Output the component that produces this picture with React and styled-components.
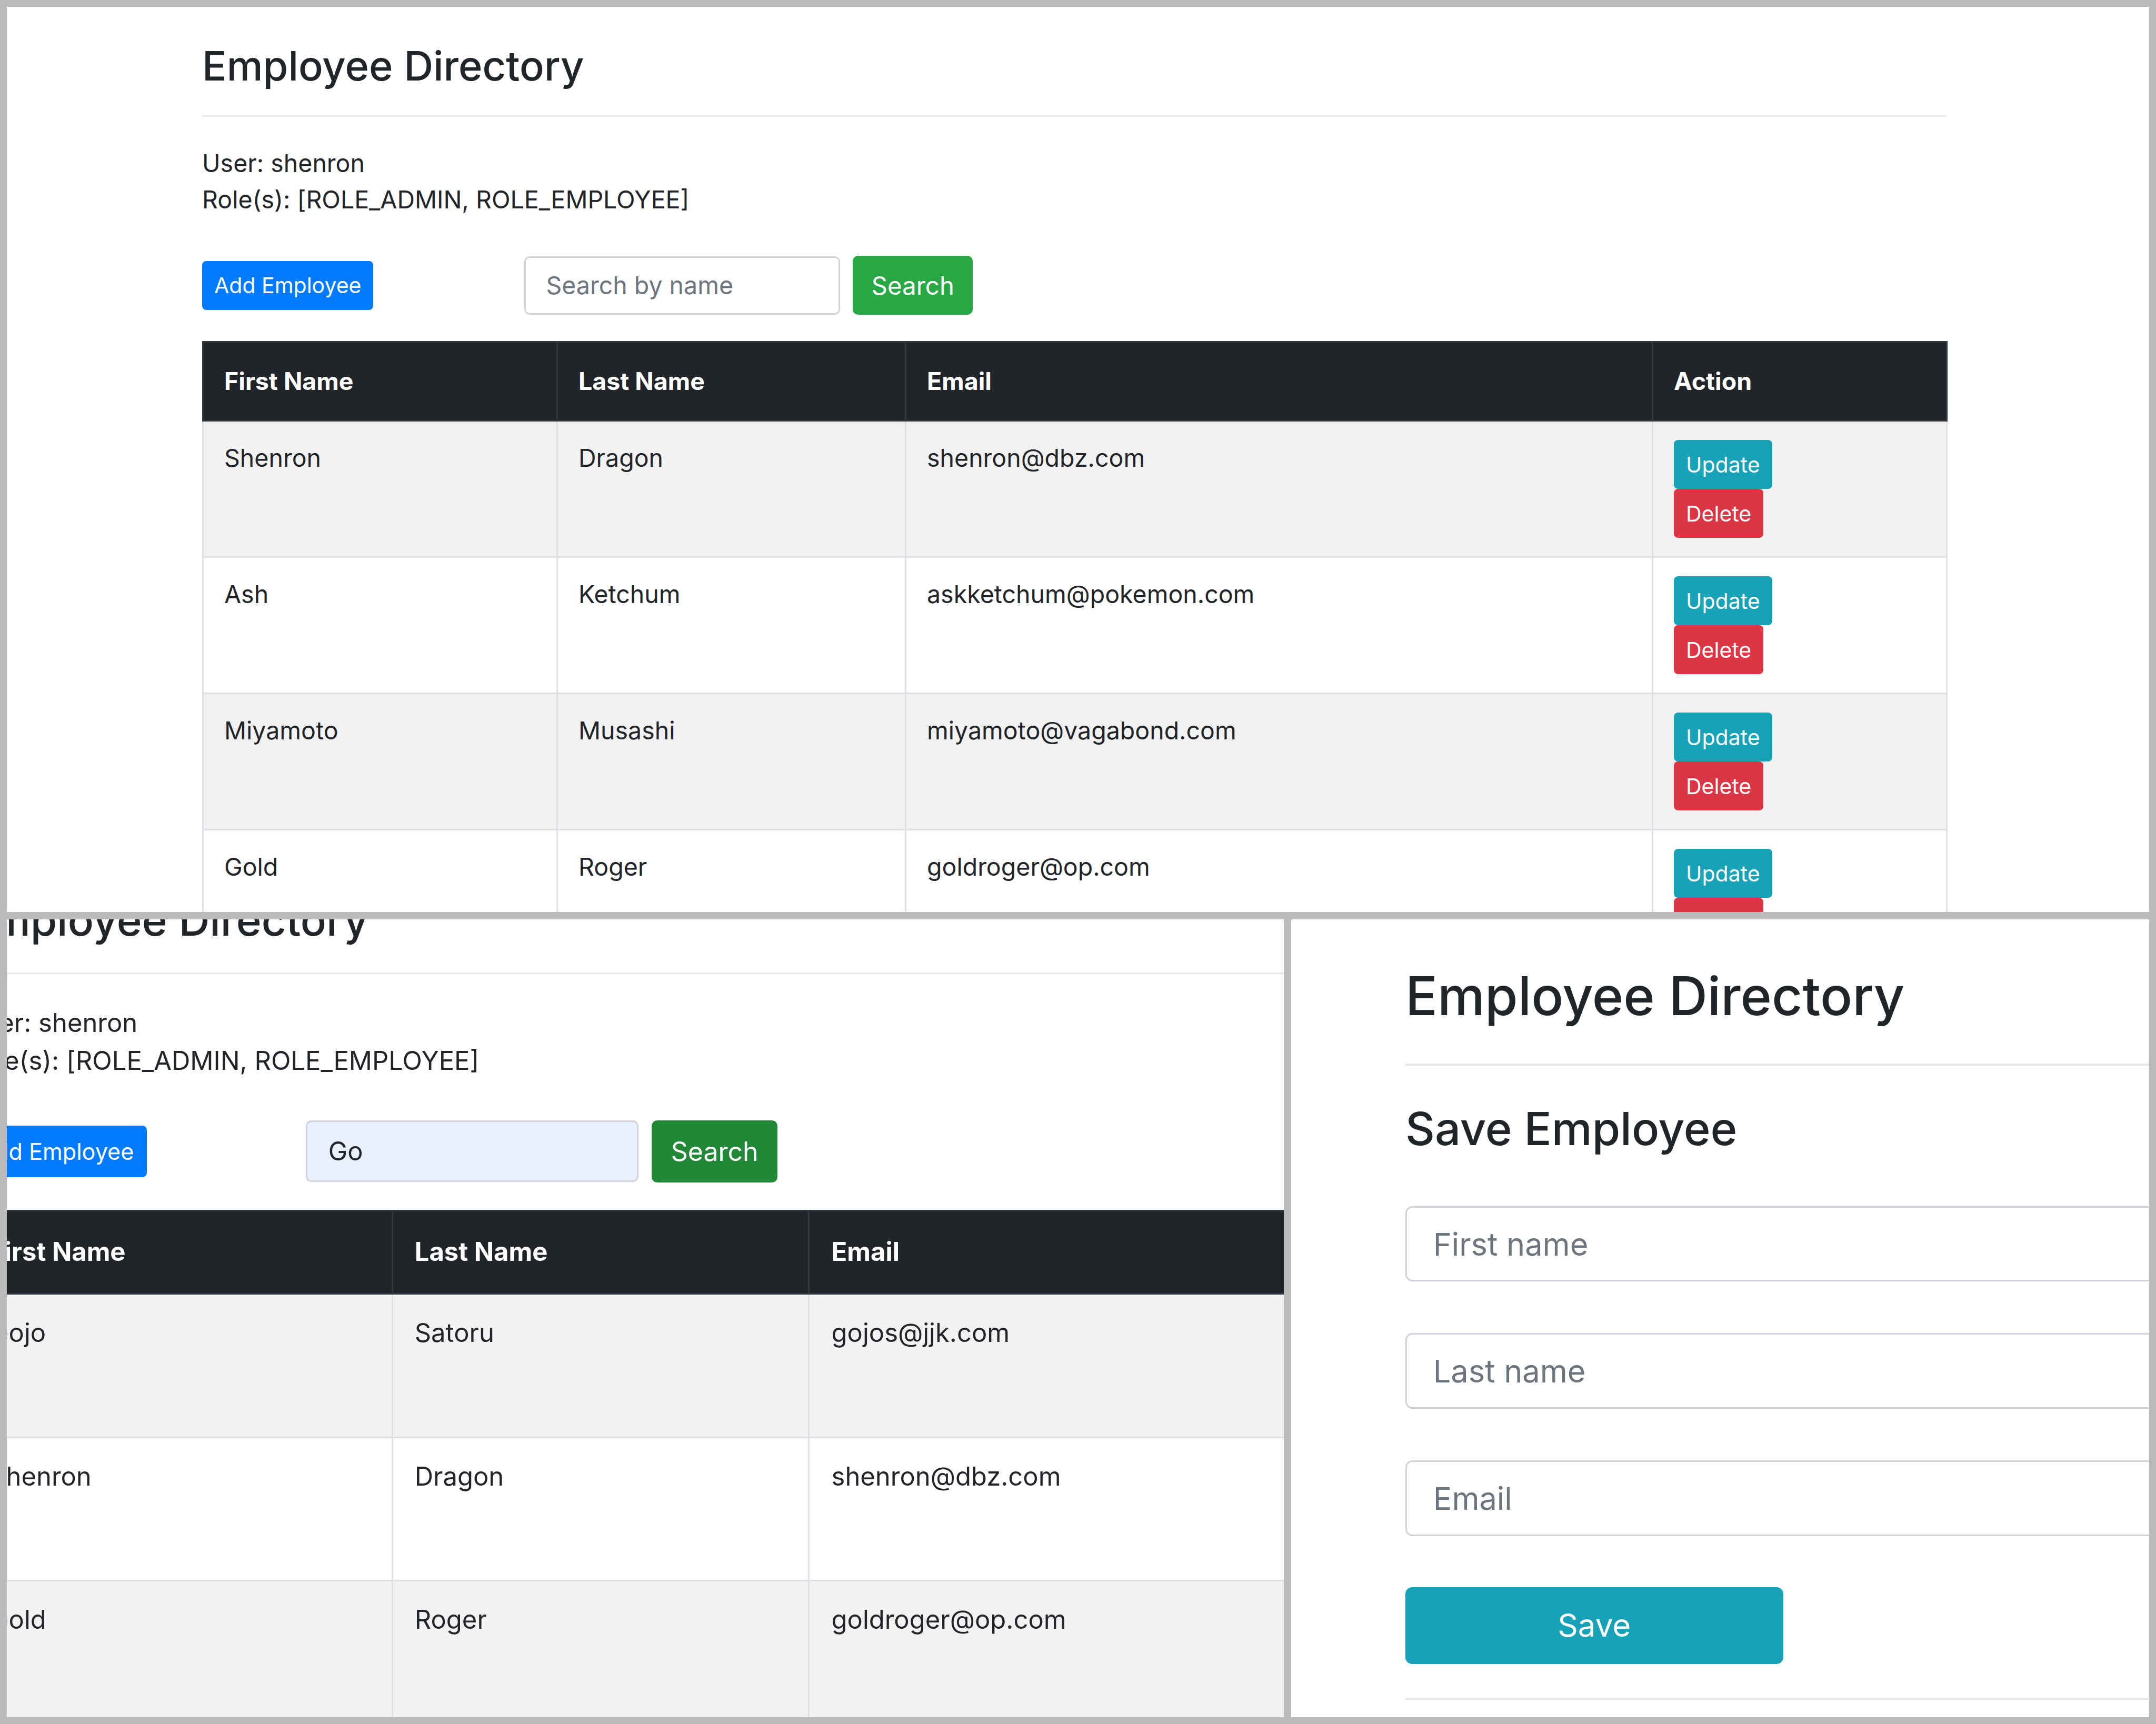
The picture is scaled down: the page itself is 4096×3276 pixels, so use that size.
import React from 'react'
import styled, {createGlobalStyle} from 'styled-components'

// every size below is in "page px" and gets multiplied by the shot's zoom (--k)
const u = (n) => `calc(var(--k) * ${n}px)`

const topRows = [
    {first: 'Shenron', last: 'Dragon', email: 'shenron@dbz.com'},
    {first: 'Ash', last: 'Ketchum', email: 'askketchum@pokemon.com'},
    {first: 'Miyamoto', last: 'Musashi', email: 'miyamoto@vagabond.com'},
    {first: 'Gold', last: 'Roger', email: 'goldroger@op.com'},
]

const searchRows = [
    {first: 'Gojo', last: 'Satoru', email: 'gojos@jjk.com'},
    {first: 'Shenron', last: 'Dragon', email: 'shenron@dbz.com'},
    {first: 'Gold', last: 'Roger', email: 'goldroger@op.com'},
]

const DirectoryPage = ({cols, rows, query, active}) => (
    <Container $w={cols.reduce((a, b) => a + b, 0)}>
        <Title>Employee Directory</Title>
        <Rule/>
        <Info>
            <InfoLine>User: shenron</InfoLine>
            <InfoLine>Role(s): [ROLE_ADMIN, ROLE_EMPLOYEE]</InfoLine>
        </Info>
        <Toolbar>
            <SmallButton $color="#007bff">Add Employee</SmallButton>
            <SearchForm>
                <SearchInput placeholder="Search by name" value={query} readOnly $filled={!!query}/>
                <SearchButton $active={active}>Search</SearchButton>
            </SearchForm>
        </Toolbar>
        <Table>
            <colgroup>
                {cols.map((w, i) => <Col key={i} $w={w}/>)}
            </colgroup>
            <thead>
            <tr>
                <Th>First Name</Th>
                <Th>Last Name</Th>
                <Th>Email</Th>
                <Th>Action</Th>
            </tr>
            </thead>
            <tbody>
            {rows.map((row, i) =>
                <Tr key={i}>
                    <Td>{row.first}</Td>
                    <Td>{row.last}</Td>
                    <Td>{row.email}</Td>
                    <Td>
                        <ButtonStack>
                            <SmallButton $color="#17a2b8">Update</SmallButton>
                            <SmallButton $color="#dc3545">Delete</SmallButton>
                        </ButtonStack>
                    </Td>
                </Tr>
            )}
            </tbody>
        </Table>
    </Container>
)

const SaveForm = () => (
    <Container $w={1300}>
        <Title>Employee Directory</Title>
        <Rule $top={50}/>
        <SubTitle>Save Employee</SubTitle>
        <Field placeholder="First name"/>
        <Field placeholder="Last name"/>
        <Field placeholder="Email"/>
        <SaveButton>Save</SaveButton>
        <Rule $top={49}/>
    </Container>
)

const App = () => {
    return (
        <>
            <GlobalStyle/>
            <Collage>
                <Shot $k={1} $wide $x={371} $y={64}>
                    <DirectoryPage cols={[673, 662, 1419, 559]} rows={topRows}/>
                </Shot>
                <Shot $k={1.053} $x={-77} $y={-49}>
                    <DirectoryPage cols={[767, 752, 1330, 530]} rows={searchRows} query="Go" active/>
                </Shot>
                <Shot $k={1.307} $x={217} $y={82}>
                    <SaveForm/>
                </Shot>
            </Collage>
        </>
    )
}

export default App

const GlobalStyle = createGlobalStyle`
  html, body {
    margin: 0;
    padding: 0;
    background: #bbbbbb;
  }

  body {
    font-family: Inter, "Noto Sans", "Liberation Sans", sans-serif;
    color: #212529;
  }

  * {
    box-sizing: border-box;
  }
`

const Collage = styled.div`
  width: 4096px;
  height: 3276px;
  padding: 13px;
  display: grid;
  grid-template-columns: 2426px 1630px;
  grid-template-rows: 1720px 1516px;
  gap: 14px;
  background: #bbbbbb;
`

const Shot = styled.section`
  --k: ${p => p.$k};
  grid-column: ${p => p.$wide ? '1 / span 2' : 'auto'};
  background: #ffffff;
  overflow: hidden;
  padding-left: ${p => Math.max(p.$x, 0)}px;
  padding-top: ${p => Math.max(p.$y, 0)}px;

  & > div {
    margin-left: ${p => Math.min(p.$x, 0)}px;
    margin-top: ${p => Math.min(p.$y, 0)}px;
  }
`

const Container = styled.div`
  width: ${p => u(p.$w)};
  flex-shrink: 0;
`

const Title = styled.h3`
  margin: 0;
  font-size: ${u(77.5)};
  line-height: ${u(97)};
  font-weight: 500;
  color: #212529;
`

const SubTitle = styled.h4`
  margin: ${u(50)} 0 0;
  font-size: ${u(66.2)};
  line-height: ${u(84)};
  font-weight: 500;
`

const Rule = styled.div`
  margin-top: ${p => u(p.$top ?? 45)};
  height: ${u(3)};
  background: #e6e7e8;
`

const Info = styled.div`
  margin-top: ${u(54)};
  font-size: ${u(46.5)};
  line-height: ${u(69)};
`

const InfoLine = styled.div``

const Toolbar = styled.div`
  margin-top: ${u(72)};
  height: ${u(112)};
  display: flex;
  align-items: center;
`

const SearchForm = styled.div`
  margin-left: ${u(287)};
  display: flex;
  align-items: center;
  gap: ${u(24)};
`

const SmallButton = styled.button`
  height: ${u(93)};
  padding: 0 ${u(23)};
  border: none;
  border-radius: ${u(8)};
  background: ${p => p.$color};
  color: #ffffff;
  font-family: inherit;
  font-size: ${u(41)};
  font-weight: 400;
  white-space: nowrap;
`

const SearchInput = styled.input`
  width: ${u(600)};
  height: ${u(111)};
  padding: 0 ${u(38)};
  border: ${u(3)} solid #ced4da;
  border-radius: ${u(10)};
  background: ${p => p.$filled ? '#e8f0fe' : '#ffffff'};
  color: #212529;
  font-family: inherit;
  font-size: ${u(46.5)};
  outline: none;

  &::placeholder {
    color: #6c757d;
  }
`

const SearchButton = styled.button`
  height: ${u(112)};
  padding: 0 ${u(35)};
  border: none;
  border-radius: ${u(10)};
  background: ${p => p.$active ? '#218838' : '#28a745'};
  color: #ffffff;
  font-family: inherit;
  font-size: ${u(47.5)};
`

const Table = styled.table`
  margin-top: ${u(50)};
  border-collapse: collapse;
  table-layout: fixed;
  width: 100%;
  font-size: ${u(46.5)};
  line-height: ${u(69)};
`

const Col = styled.col`
  width: ${p => u(p.$w)};
`

const Th = styled.th`
  height: ${u(150)};
  padding: 0 ${u(39)};
  background: #212529;
  color: #ffffff;
  font-weight: 700;
  text-align: left;
  border: ${u(3)} solid #32383e;
`

const Tr = styled.tr`
  &:nth-of-type(odd) {
    background: #f2f2f2;
  }
`

const Td = styled.td`
  padding: ${u(35)} ${u(39)};
  vertical-align: top;
  border: ${u(3)} solid #dee2e6;
  color: #212529;
`

const ButtonStack = styled.div`
  display: flex;
  flex-direction: column;
  align-items: flex-start;
`

const Field = styled.input`
  display: block;
  width: 100%;
  height: ${u(110)};
  margin-top: ${u(70)};
  padding: 0 ${u(38)};
  border: ${u(3)} solid #ced4da;
  border-radius: ${u(10)};
  font-family: inherit;
  font-size: ${u(45.5)};
  color: #212529;
  outline: none;

  & + & {
    margin-top: ${u(75)};
  }

  &::placeholder {
    color: #6c757d;
  }
`

const SaveButton = styled.button`
  display: block;
  margin-top: ${u(74)};
  width: ${u(549)};
  height: ${u(112)};
  border: none;
  border-radius: ${u(10)};
  background: #17a2b8;
  color: #ffffff;
  font-family: inherit;
  font-size: ${u(46)};
`
